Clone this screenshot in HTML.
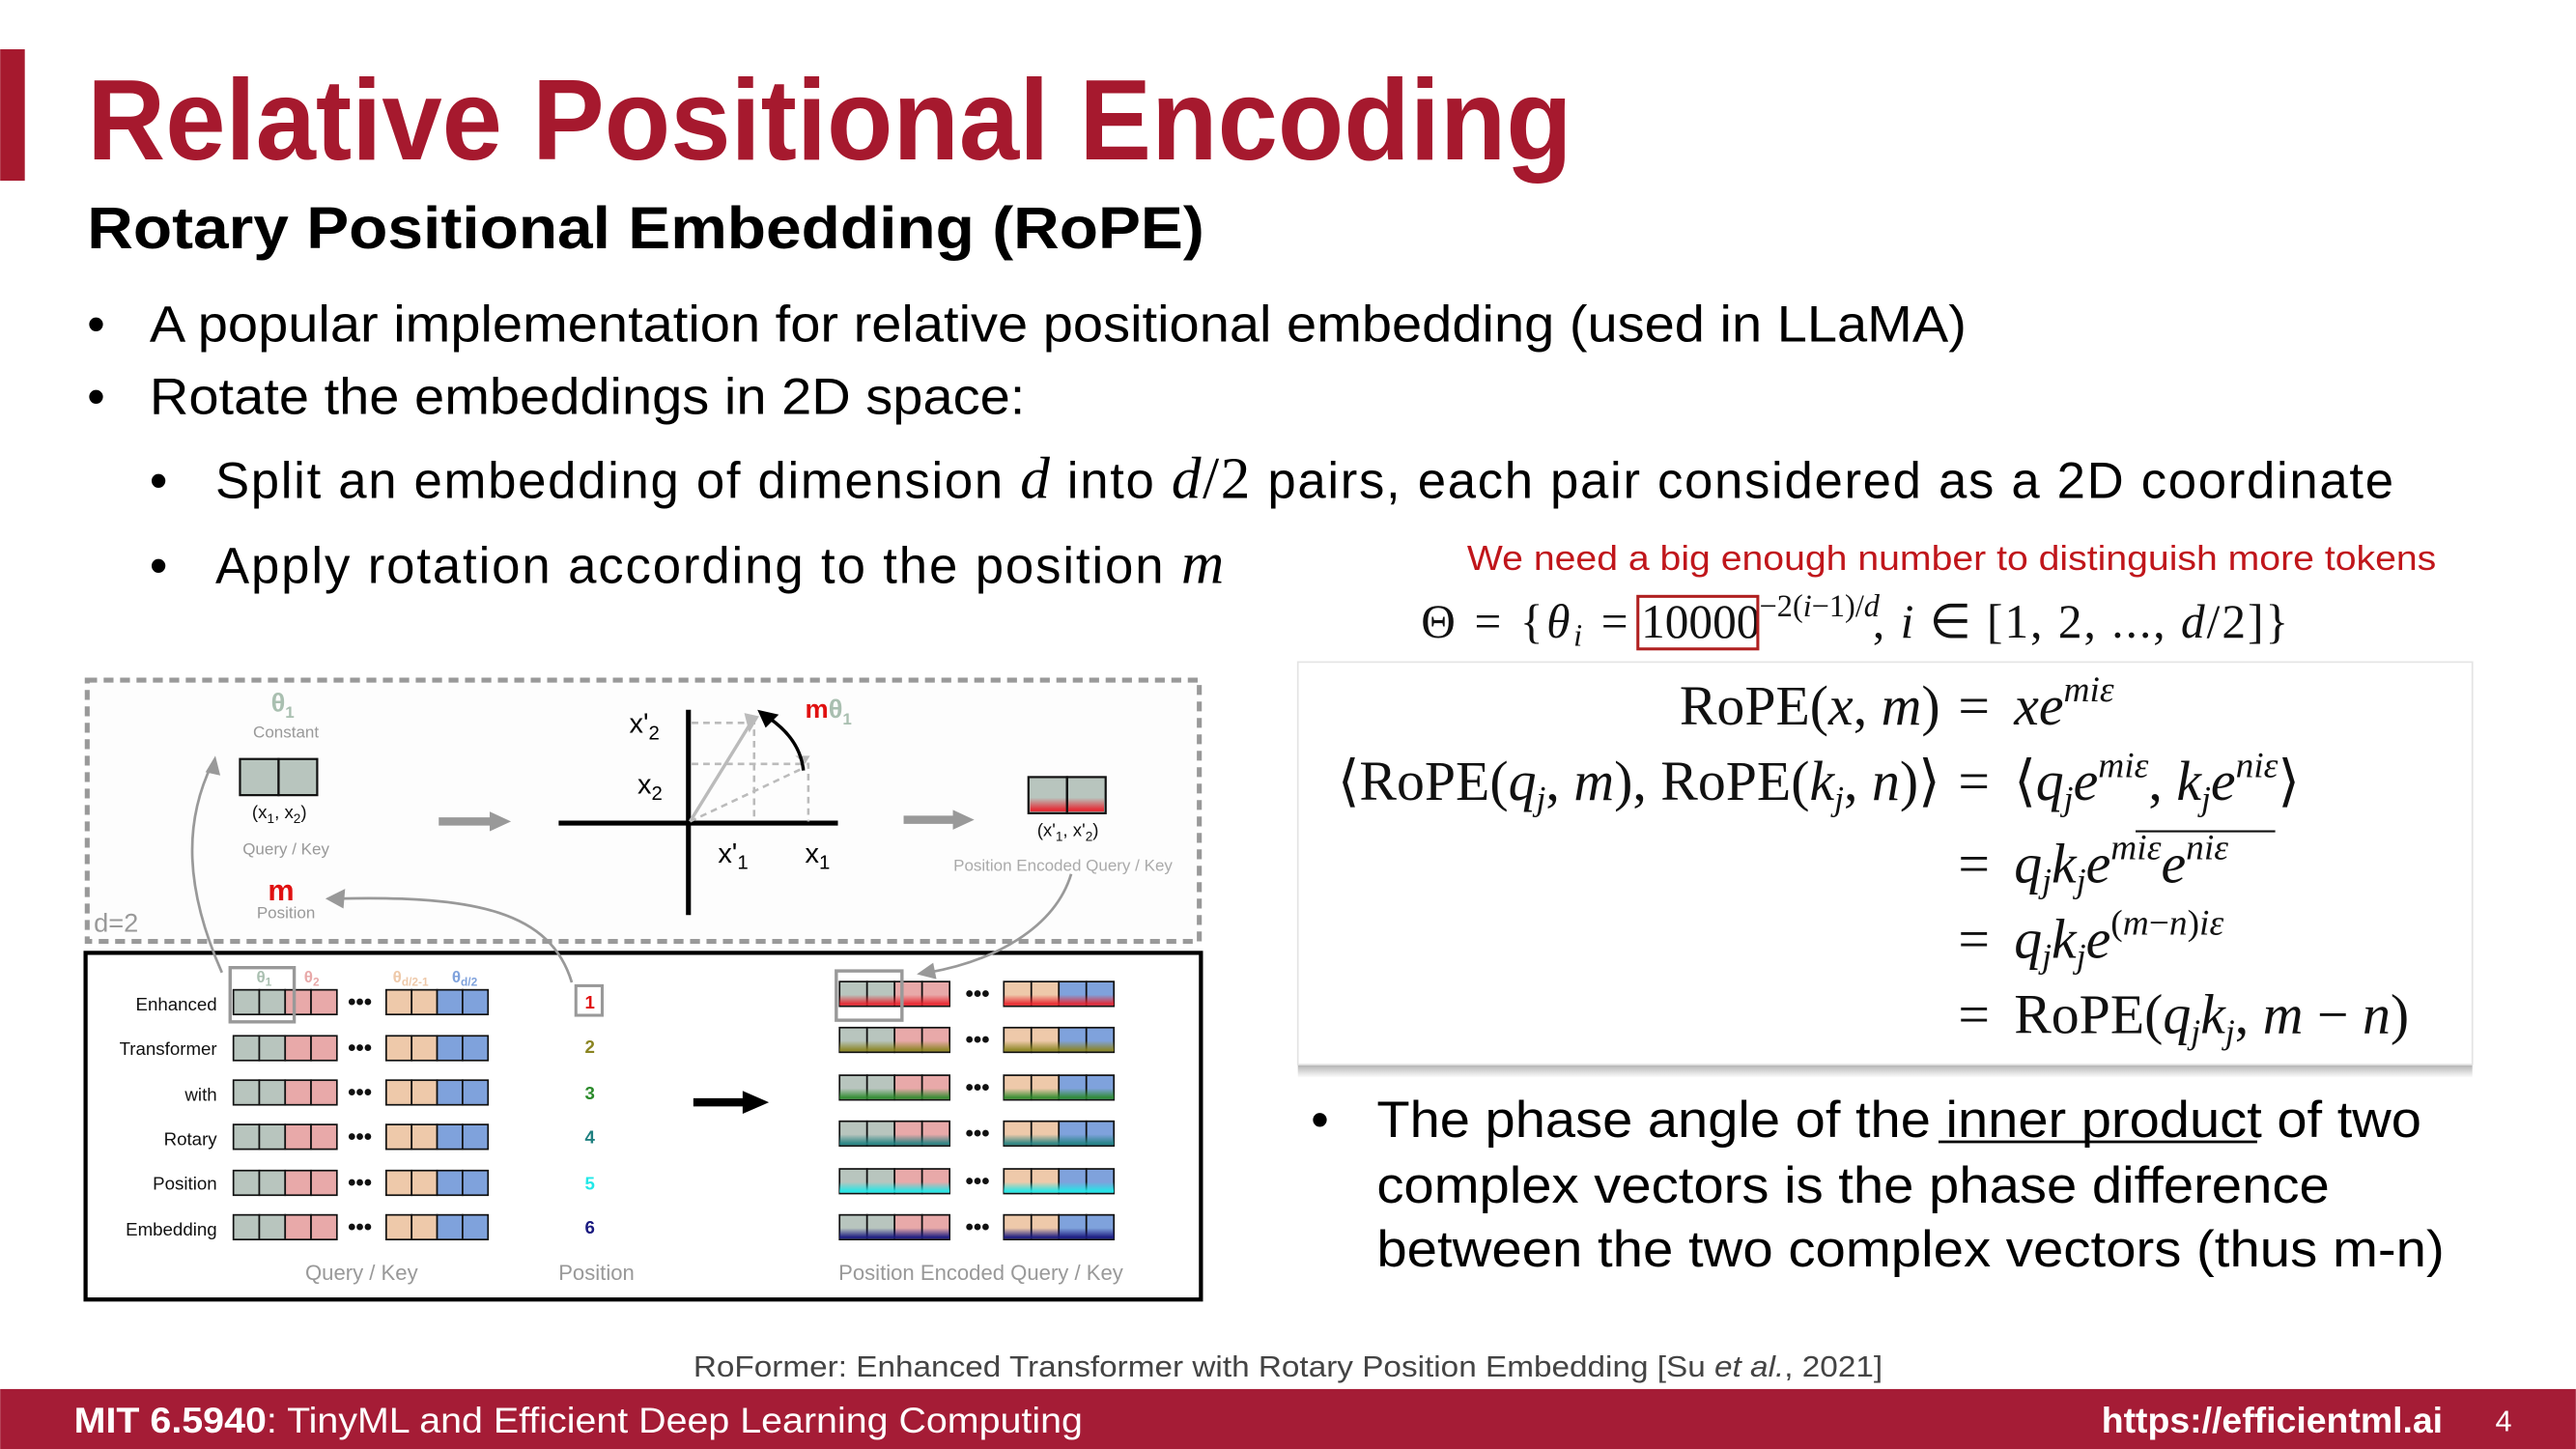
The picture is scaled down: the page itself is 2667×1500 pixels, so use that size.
<!DOCTYPE html>
<html><head><meta charset="utf-8"><style>
html,body{margin:0;padding:0;background:#fff;}
svg{display:block;}
.s{font-family:"Liberation Sans",sans-serif;}
.m{font-family:"Liberation Serif",serif;}
</style></head><body>
<svg width="2667" height="1500" viewBox="0 0 1568 882" xmlns="http://www.w3.org/2000/svg">
<defs>
<linearGradient id="g1" x1="0" y1="0" x2="0" y2="1"><stop offset="0.35" stop-color="#e8202a" stop-opacity="0"/><stop offset="0.9" stop-color="#e8202a" stop-opacity="0.9"/></linearGradient>
<linearGradient id="g2" x1="0" y1="0" x2="0" y2="1"><stop offset="0.35" stop-color="#8a8420" stop-opacity="0"/><stop offset="0.9" stop-color="#8a8420" stop-opacity="0.9"/></linearGradient>
<linearGradient id="g3" x1="0" y1="0" x2="0" y2="1"><stop offset="0.35" stop-color="#2a8a2a" stop-opacity="0"/><stop offset="0.9" stop-color="#2a8a2a" stop-opacity="0.9"/></linearGradient>
<linearGradient id="g4" x1="0" y1="0" x2="0" y2="1"><stop offset="0.35" stop-color="#1f8080" stop-opacity="0"/><stop offset="0.9" stop-color="#1f8080" stop-opacity="0.9"/></linearGradient>
<linearGradient id="g5" x1="0" y1="0" x2="0" y2="1"><stop offset="0.35" stop-color="#22e8e8" stop-opacity="0"/><stop offset="0.9" stop-color="#22e8e8" stop-opacity="0.95"/></linearGradient>
<linearGradient id="g6" x1="0" y1="0" x2="0" y2="1"><stop offset="0.35" stop-color="#1a1a80" stop-opacity="0"/><stop offset="0.9" stop-color="#1a1a80" stop-opacity="0.95"/></linearGradient>
<linearGradient id="sh" x1="0" y1="0" x2="0" y2="1"><stop offset="0" stop-color="#888"/><stop offset="1" stop-color="#fff"/></linearGradient>
<g id="lrow" stroke="#111" stroke-width="1">
<rect x="142" y="0" width="15.75" height="15" fill="#b8c5be"/><rect x="157.75" y="0" width="15.75" height="15" fill="#b8c5be"/>
<rect x="173.5" y="0" width="15.75" height="15" fill="#e8a9a9"/><rect x="189.25" y="0" width="15.75" height="15" fill="#e8a9a9"/>
<rect x="235" y="0" width="15.5" height="15" fill="#eec9aa"/><rect x="250.5" y="0" width="15.5" height="15" fill="#eec9aa"/>
<rect x="266" y="0" width="15.5" height="15" fill="#7fa2dc"/><rect x="281.5" y="0" width="15.5" height="15" fill="#7fa2dc"/>
<text x="219" y="12" text-anchor="middle" class="s" font-size="14" font-weight="bold" fill="#111" stroke="none">•••</text>
</g>
<g id="rrow" stroke="#111" stroke-width="1">
<rect x="511" y="0" width="16.75" height="15" fill="#b8c5be"/><rect x="527.75" y="0" width="16.75" height="15" fill="#b8c5be"/>
<rect x="544.5" y="0" width="16.75" height="15" fill="#e8a9a9"/><rect x="561.25" y="0" width="16.75" height="15" fill="#e8a9a9"/>
<rect x="611" y="0" width="16.75" height="15" fill="#eec9aa"/><rect x="627.75" y="0" width="16.75" height="15" fill="#eec9aa"/>
<rect x="644.5" y="0" width="16.75" height="15" fill="#7fa2dc"/><rect x="661.25" y="0" width="16.75" height="15" fill="#7fa2dc"/>
<text x="595" y="12" text-anchor="middle" class="s" font-size="14" font-weight="bold" fill="#111" stroke="none">•••</text>
</g>
</defs>

<!-- header -->
<rect x="0" y="30" width="15" height="80" fill="#a6192e"/>
<text x="53" y="97" class="s" font-size="70" font-weight="bold" fill="#a6192e" textLength="904" lengthAdjust="spacingAndGlyphs">Relative Positional Encoding</text>
<text x="53" y="151" class="s" font-size="36" font-weight="bold" fill="#000" textLength="680" lengthAdjust="spacingAndGlyphs">Rotary Positional Embedding (RoPE)</text>

<g class="s" font-size="31" fill="#000">
<text x="53" y="208">•</text>
<text x="91" y="208" textLength="1106" lengthAdjust="spacingAndGlyphs">A popular implementation for relative positional embedding (used in LLaMA)</text>
<text x="53" y="252">•</text>
<text x="91" y="252" textLength="533" lengthAdjust="spacingAndGlyphs">Rotate the embeddings in 2D space:</text>
<text x="91" y="303">•</text>
<text x="131" y="303" textLength="1326" lengthAdjust="spacing">Split an embedding of dimension <tspan class="m" font-style="italic" font-size="36">d</tspan> into <tspan class="m" font-style="italic" font-size="36">d</tspan><tspan class="m" font-size="36">/2</tspan> pairs, each pair considered as a 2D coordinate</text>
<text x="91" y="355">•</text>
<text x="131" y="355" textLength="614" lengthAdjust="spacing">Apply rotation according to the position <tspan class="m" font-style="italic" font-size="36">m</tspan></text>
</g>

<text x="893" y="347" class="s" font-size="21" fill="#c0161b" textLength="590" lengthAdjust="spacingAndGlyphs">We need a big enough number to distinguish more tokens</text>

<!-- theta -->
<g class="m" font-size="29" fill="#111">
<text x="865" y="388" textLength="126" lengthAdjust="spacing">Θ = {<tspan font-style="italic">θ</tspan><tspan font-style="italic" font-size="19" dy="5">i</tspan><tspan dy="-5"> =</tspan></text>
<text x="999" y="388">10000</text>
<text x="1071" y="375" font-size="19">−2(<tspan font-style="italic">i</tspan>−1)/<tspan font-style="italic">d</tspan></text>
<text x="1140" y="388" textLength="253" lengthAdjust="spacing">, <tspan font-style="italic">i</tspan> ∈ [1, 2, ..., <tspan font-style="italic">d</tspan>/2]}</text>
</g>
<rect x="997" y="363" width="73" height="32" fill="none" stroke="#b02020" stroke-width="1.8"/>

<!-- formula box -->
<rect x="790" y="644" width="715" height="12" fill="url(#sh)"/>
<rect x="790" y="403" width="715" height="245" fill="#fff" stroke="#e4e4e4" stroke-width="1"/>
<g class="m" font-size="34" fill="#111">
<text x="1181" y="441" text-anchor="end">RoPE(<tspan font-style="italic">x</tspan>, <tspan font-style="italic">m</tspan>)</text>
<text x="1192" y="441">=</text>
<text x="1226" y="441" font-style="italic">xe<tspan font-size="22" dy="-14">miε</tspan></text>

<text x="1181" y="487" text-anchor="end">⟨RoPE(<tspan font-style="italic">q</tspan><tspan font-style="italic" font-size="21" dy="6">j</tspan><tspan dy="-6">, </tspan><tspan font-style="italic">m</tspan>), RoPE(<tspan font-style="italic">k</tspan><tspan font-style="italic" font-size="21" dy="6">j</tspan><tspan dy="-6">, </tspan><tspan font-style="italic">n</tspan>)⟩</text>
<text x="1192" y="487">=</text>
<text x="1226" y="487">⟨<tspan font-style="italic">q</tspan><tspan font-style="italic" font-size="21" dy="6">j</tspan><tspan font-style="italic" dy="-6">e</tspan><tspan font-style="italic" font-size="22" dy="-14">miε</tspan><tspan dy="14">, </tspan><tspan font-style="italic">k</tspan><tspan font-style="italic" font-size="21" dy="6">j</tspan><tspan font-style="italic" dy="-6">e</tspan><tspan font-style="italic" font-size="22" dy="-14">niε</tspan><tspan dy="14">⟩</tspan></text>

<text x="1192" y="537">=</text>
<text x="1226" y="537" font-style="italic">q<tspan font-size="21" dy="6">j</tspan><tspan dy="-6">k</tspan><tspan font-size="21" dy="6">j</tspan><tspan dy="-6">e</tspan><tspan font-size="22" dy="-14">miε</tspan><tspan dy="14">e</tspan><tspan font-size="22" dy="-14">niε</tspan></text>
<line x1="1300" y1="506" x2="1385" y2="506" stroke="#111" stroke-width="1.2"/>

<text x="1192" y="583">=</text>
<text x="1226" y="583" font-style="italic">q<tspan font-size="21" dy="6">j</tspan><tspan dy="-6">k</tspan><tspan font-size="21" dy="6">j</tspan><tspan dy="-6">e</tspan><tspan font-size="22" dy="-14" font-style="normal">(</tspan><tspan font-size="22">m</tspan><tspan font-size="22" font-style="normal">−</tspan><tspan font-size="22">n</tspan><tspan font-size="22" font-style="normal">)</tspan><tspan font-size="22">iε</tspan></text>

<text x="1192" y="629">=</text>
<text x="1226" y="629">RoPE(<tspan font-style="italic">q</tspan><tspan font-style="italic" font-size="21" dy="6">j</tspan><tspan font-style="italic" dy="-6">k</tspan><tspan font-style="italic" font-size="21" dy="6">j</tspan><tspan dy="-6">, </tspan><tspan font-style="italic">m</tspan> − <tspan font-style="italic">n</tspan>)</text>
</g>

<!-- right bullet -->
<g class="s" font-size="31" fill="#000">
<text x="798" y="692">•</text>
<text x="838" y="692" textLength="636" lengthAdjust="spacingAndGlyphs">The phase angle of the inner product of two</text>
<text x="838" y="732" textLength="580" lengthAdjust="spacingAndGlyphs">complex vectors is the phase difference</text>
<text x="838" y="771" textLength="650" lengthAdjust="spacingAndGlyphs">between the two complex vectors (thus m-n)</text>
</g>
<line x1="1180" y1="695" x2="1374" y2="695" stroke="#000" stroke-width="1.6"/>

<!-- diagram upper dashed box -->
<rect x="53" y="414" width="677" height="159" fill="#fdfdfd" stroke="#999" stroke-width="3" stroke-dasharray="6,4"/>
<text x="57" y="567" class="s" font-size="16" fill="#999">d=2</text>
<text x="172" y="433" text-anchor="middle" class="s" font-size="16" font-weight="bold" fill="#a9bfb0">θ<tspan font-size="10" dy="4">1</tspan></text>
<text x="174" y="449" text-anchor="middle" class="s" font-size="10" fill="#999">Constant</text>
<rect x="146" y="462" width="23.5" height="22" fill="#b8c5be" stroke="#111" stroke-width="1.3"/>
<rect x="169.5" y="462" width="23.5" height="22" fill="#b8c5be" stroke="#111" stroke-width="1.3"/>
<text x="170" y="498" text-anchor="middle" class="s" font-size="11" fill="#111">(x<tspan font-size="8" dy="3">1</tspan><tspan dy="-3">, x</tspan><tspan font-size="8" dy="3">2</tspan><tspan dy="-3">)</tspan></text>
<text x="174" y="520" text-anchor="middle" class="s" font-size="10" fill="#999">Query / Key</text>
<text x="171" y="548" text-anchor="middle" class="s" font-size="18" font-weight="bold" fill="#e01010">m</text>
<text x="174" y="559" text-anchor="middle" class="s" font-size="10" fill="#999">Position</text>
<path d="M267 500 H300" stroke="#999" stroke-width="5"/><path d="M298 494 L311 500 L298 506 Z" fill="#999"/>
<path d="M550 499 H582" stroke="#999" stroke-width="5"/><path d="M580 493 L593 499 L580 505 Z" fill="#999"/>
<!-- axes -->
<line x1="340" y1="501" x2="510" y2="501" stroke="#000" stroke-width="3"/>
<line x1="419" y1="432" x2="419" y2="557" stroke="#000" stroke-width="3"/>
<g stroke="#bbb" stroke-width="1.5" stroke-dasharray="4,3" fill="none">
<path d="M421 440 H459 V500"/><path d="M421 465 H492 V500"/><path d="M420 500 L490 467"/>
</g>
<path d="M420 500 L457 440" stroke="#bbb" stroke-width="2"/>
<path d="M453 434 L462 436 L456 446 Z" fill="#bbb"/>
<path d="M490 465 L484 460 L493 460 Z" fill="#bbb"/>
<path d="M489 469 Q487 450 468 437" stroke="#000" stroke-width="2" fill="none"/>
<path d="M461 432 L474 435 L466 443 Z" fill="#000"/>
<text x="490" y="437" class="s" font-size="16" font-weight="bold" fill="#e01010">m<tspan fill="#a9bfb0">θ</tspan><tspan fill="#a9bfb0" font-size="10" dy="4">1</tspan></text>
<g class="s" font-size="17" fill="#000">
<text x="383" y="446">x'<tspan font-size="12" dy="4">2</tspan></text>
<text x="388" y="483">x<tspan font-size="12" dy="4">2</tspan></text>
<text x="437" y="525">x'<tspan font-size="12" dy="4">1</tspan></text>
<text x="490" y="525">x<tspan font-size="12" dy="4">1</tspan></text>
</g>
<rect x="626" y="473" width="23.5" height="22" fill="#b8c5be" stroke="#111" stroke-width="1.3"/>
<rect x="649.5" y="473" width="23.5" height="22" fill="#b8c5be" stroke="#111" stroke-width="1.3"/>
<rect x="627" y="481" width="45" height="13" fill="url(#g1)"/>
<line x1="649.5" y1="473" x2="649.5" y2="495" stroke="#111" stroke-width="1.3"/>
<text x="650" y="509" text-anchor="middle" class="s" font-size="11" fill="#111">(x'<tspan font-size="8" dy="3">1</tspan><tspan dy="-3">, x'</tspan><tspan font-size="8" dy="3">2</tspan><tspan dy="-3">)</tspan></text>
<text x="647" y="530" text-anchor="middle" class="s" font-size="10" fill="#aaa">Position Encoded Query / Key</text>

<!-- lower solid box -->
<rect x="52" y="580" width="679" height="211" fill="#fff" stroke="#000" stroke-width="2.5"/>
<g stroke="#999" stroke-width="1.6" fill="none">
<path d="M135 592 C112 540 112 500 129 465"/>
<path d="M348 598 C335 555 290 545 206 547"/>
<path d="M652 532 C642 565 605 585 565 592"/>
</g>
<path d="M125 470 L131 460 L134 472 Z" fill="#999"/>
<path d="M198 547 L210 541 L209 553 Z" fill="#999"/>
<path d="M558 593 L568 586 L570 596 Z" fill="#999"/>

<g class="s" font-size="11" fill="#111" text-anchor="end">
<text x="132" y="615">Enhanced</text>
<text x="132" y="642">Transformer</text>
<text x="132" y="670">with</text>
<text x="132" y="697">Rotary</text>
<text x="132" y="724">Position</text>
<text x="132" y="752">Embedding</text>
</g>
<use href="#lrow" y="602.5"/><use href="#lrow" y="630.5"/><use href="#lrow" y="657.5"/>
<use href="#lrow" y="684.5"/><use href="#lrow" y="712.5"/><use href="#lrow" y="739.5"/>
<g class="s" font-size="10" font-weight="bold">
<text x="156" y="598" fill="#a9bfb0">θ<tspan font-size="7" dy="2">1</tspan></text>
<text x="185" y="598" fill="#e8a9a9">θ<tspan font-size="7" dy="2">2</tspan></text>
<text x="239" y="598" fill="#eec9aa">θ<tspan font-size="7" dy="2">d/2-1</tspan></text>
<text x="275" y="598" fill="#7fa2dc">θ<tspan font-size="7" dy="2">d/2</tspan></text>
</g>
<rect x="140" y="589" width="39" height="33" fill="none" stroke="#999" stroke-width="2"/>
<rect x="350.5" y="600" width="16" height="18" fill="#fff" stroke="#999" stroke-width="1.8"/>
<g class="s" font-size="11" font-weight="bold" text-anchor="middle">
<text x="359" y="614" fill="#e01010">1</text>
<text x="359" y="641" fill="#8a8420">2</text>
<text x="359" y="669" fill="#2a8a2a">3</text>
<text x="359" y="696" fill="#1f8080">4</text>
<text x="359" y="724" fill="#22e8e8">5</text>
<text x="359" y="751" fill="#1a1a80">6</text>
</g>
<path d="M422 671 H455" stroke="#000" stroke-width="5"/><path d="M452 664 L468 671 L452 678 Z" fill="#000"/>

<use href="#rrow" y="597.5"/>
<rect x="511" y="602" width="67" height="10" fill="url(#g1)"/><rect x="611" y="602" width="67" height="10" fill="url(#g1)"/>
<use href="#rrow" y="625.5"/>
<rect x="511" y="630" width="67" height="10" fill="url(#g2)"/><rect x="611" y="630" width="67" height="10" fill="url(#g2)"/>
<use href="#rrow" y="654.5"/>
<rect x="511" y="659" width="67" height="10" fill="url(#g3)"/><rect x="611" y="659" width="67" height="10" fill="url(#g3)"/>
<use href="#rrow" y="682.5"/>
<rect x="511" y="687" width="67" height="10" fill="url(#g4)"/><rect x="611" y="687" width="67" height="10" fill="url(#g4)"/>
<use href="#rrow" y="711.5"/>
<rect x="511" y="716" width="67" height="10" fill="url(#g5)"/><rect x="611" y="716" width="67" height="10" fill="url(#g5)"/>
<use href="#rrow" y="739.5"/>
<rect x="511" y="744" width="67" height="10" fill="url(#g6)"/><rect x="611" y="744" width="67" height="10" fill="url(#g6)"/>
<rect x="509" y="591" width="40" height="30" fill="none" stroke="#999" stroke-width="2"/>

<g class="s" font-size="13" fill="#999" text-anchor="middle">
<text x="220" y="779">Query / Key</text>
<text x="363" y="779">Position</text>
<text x="597" y="779">Position Encoded Query / Key</text>
</g>

<text x="422" y="838" class="s" font-size="18" fill="#444" textLength="724" lengthAdjust="spacingAndGlyphs">RoFormer: Enhanced Transformer with Rotary Position Embedding [Su <tspan font-style="italic">et al.</tspan>, 2021]</text>

<rect x="0" y="845.5" width="1568" height="37" fill="#a51c36"/>
<text x="45" y="872" class="s" font-size="22" fill="#fff" textLength="614" lengthAdjust="spacingAndGlyphs"><tspan font-weight="bold">MIT 6.5940</tspan>: TinyML and Efficient Deep Learning Computing</text>
<text x="1487" y="872" class="s" font-size="22" font-weight="bold" fill="#fff" text-anchor="end">https://efficientml.ai</text>
<text x="1519" y="871" class="s" font-size="18" fill="#fff">4</text>
</svg>
</body></html>
